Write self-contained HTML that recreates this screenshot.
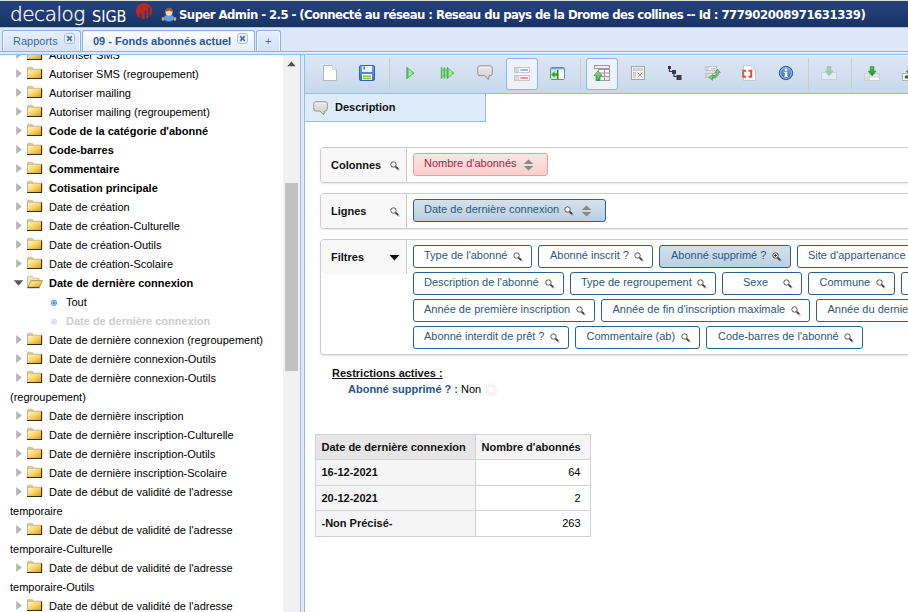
<!DOCTYPE html>
<html lang="fr">
<head>
<meta charset="utf-8">
<title>decalog SIGB</title>
<style>
*{box-sizing:border-box;margin:0;padding:0}
html,body{width:908px;height:612px;overflow:hidden;background:#fff}
body{font-family:"Liberation Sans",sans-serif;font-size:11px;color:#000;position:relative}
.abs{position:absolute}
/* header */
#hdr{position:absolute;left:0;top:0;width:908px;height:27px;background:linear-gradient(#23417c 0,#203c75 50%,#193264 100%);border-top:1px solid #dedede}
#logo{position:absolute;left:10px;top:0px;color:#fff;font-family:"DejaVu Sans Light","DejaVu Sans",sans-serif;font-weight:200;font-size:20px;line-height:27px;letter-spacing:-0.450px;-webkit-text-stroke:0.300px #fff}
#sigb{position:absolute;left:92px;top:1.500px;color:#fff;font-family:"DejaVu Sans Condensed","DejaVu Sans",sans-serif;font-size:16px;line-height:27px}
#title{position:absolute;left:179px;top:0;color:#fff;font-family:"DejaVu Sans Condensed","DejaVu Sans",sans-serif;font-weight:bold;font-size:13px;letter-spacing:-0.562px;line-height:27px;white-space:nowrap}
/* tab bar */
#tabbar{position:absolute;left:0;top:27px;width:908px;height:28px;background:#dfe8f6;border-bottom:1px solid #99bbe8}
#tabstrip{position:absolute;left:0;top:0;width:908px;height:25px;border-bottom:1px solid #8db2e3;background:#dce8f9;box-shadow:inset 0 1px 0 #a9c3ea}
.tab{box-shadow:inset 1px 1px 0 #f2f7fd,inset -1px 0 0 #f2f7fd;position:absolute;top:3px;height:21px;border:1px solid #8db2e3;border-bottom:none;border-radius:3px 3px 0 0;background:linear-gradient(#e6effb,#d3e2f7);color:#416aa3;font-size:11px;line-height:20px;white-space:nowrap}
.clw{position:absolute;top:2px;line-height:0}
.tab.act{background:linear-gradient(#fff,#e4edf9);color:#2a559d;font-weight:bold}
/* left tree */
#tree{position:absolute;left:0;top:55px;width:283px;height:557px;overflow:hidden;background:#fff}
#treein{position:absolute;left:0;top:-9px;width:283px;padding-left:10px}
.n{line-height:19px;font-size:11px;color:#000;display:block}
.n.b{font-weight:bold}
.n.leaf{padding-left:39px}
.n.dis{color:#cdcdcd;font-weight:bold}
.ar,.fo,.bu{display:inline-block;vertical-align:top;height:19px;position:relative}
.ar{width:16px}
.fo{width:23px}
.bu{width:17px}
#sb{position:absolute;left:283px;top:55px;width:17px;height:557px;background:#f1f1f1}
#thumb{position:absolute;left:2px;top:128px;width:13px;height:188px;background:#c1c1c1}
#split{position:absolute;left:300px;top:55px;width:5px;height:557px;background:#dfe8f6;border-left:1px solid #99bbe8;border-right:1px solid #99bbe8}
/* toolbar */
#tb{position:absolute;left:305px;top:55px;width:603px;height:39px;background:linear-gradient(#dde7f4 0,#c7d8ed 100%);border-bottom:1px solid #99bbe8;overflow:hidden;box-shadow:inset 0 1px 0 #eef4fc}
.sep{position:absolute;top:3px;width:1px;height:32px;background:#cfcdcb}
.pressed{position:absolute;top:3px;width:32px;height:32px;border:1px solid #8db2e3;border-radius:3px;background:#edf3fc}
.ic{position:absolute;width:16px;height:16px;top:10px}
#desc{position:absolute;left:305px;top:94px;width:181px;height:28px;background:#deebfa;border-right:1px solid #99bbe8;border-bottom:1px solid #99bbe8;font-weight:bold;line-height:26px;padding-left:30px;color:#111}
/* panels */
.box{position:absolute;left:320px;width:620px;border:1px solid #ccc;border-radius:4px;background:#fff;box-shadow:0 1px 2px rgba(0,0,0,.1)}
.lab{position:absolute;left:0;top:0;width:86px;height:34px;background:#f8f8f8;border-right:1px solid #ccc;border-radius:3px 0 0 3px;font-weight:bold;line-height:34px;padding-left:10px;color:#111}
.li{position:absolute;left:69.300px;top:13px;line-height:0}
.btn{position:absolute;height:23px;border:1px solid #2c5f8e;border-radius:3px;background:#fff;color:#2a5885;font-size:11px;line-height:19px;white-space:nowrap;overflow:hidden}
.btn .t{position:absolute;top:0}
.btn .i{position:absolute;line-height:0}
.btn.on{background:linear-gradient(#d5e1ec,#bccfe0)}
.btn.red{border-color:#ee9c9c;background:linear-gradient(#fde6e5,#f8cfce);color:#a3283a}
.mg{display:block}
.so{display:block}
/* table */
#res{position:absolute;left:315px;top:434px;width:275px;border-collapse:collapse;table-layout:fixed;font-size:11px}
#res td,#res th{border:1px solid #d2d2d2;padding:5px 9.500px 0 5.500px;vertical-align:top;white-space:nowrap;line-height:14px}
#res th{background:#f5f5f5;text-align:left;font-weight:bold;color:#111}
#res th.h{background:#e6e6e6}
#res td{text-align:right;background:#fff}
</style>
</head>
<body>
<div id="hdr">
  <div id="logo">decalog</div>
  <div id="sigb">SIGB</div>
  <svg class="abs" style="left:135px;top:0px" width="18" height="20" viewBox="0 0 18 20"><circle cx="9" cy="10" r="8.100" fill="#b32a2a"/><path d="M5.900 12.500 V19 M10.400 9.500 V19 M14 6.500 V17" stroke="#1f3b73" stroke-width="1.400"/></svg>
  <svg class="abs" style="left:161px;top:6px" width="16" height="15" viewBox="0 0 16 15"><ellipse cx="8" cy="11" rx="5.300" ry="3.600" fill="#5aa2f2" stroke="#2f66c8" stroke-width=".8"/><rect x="0.800" y="10.300" width="2.400" height="3.400" rx="1" fill="#f5a23a"/><rect x="12.800" y="10.300" width="2.400" height="3.400" rx="1" fill="#f5a23a"/><ellipse cx="8" cy="5" rx="3.600" ry="3.700" fill="#f7d9bd"/><path d="M4.300 4.600 Q4.300 0.800 8 0.800 Q11.800 0.800 11.800 4.600 Q9.500 4.800 8.300 3.500 Q7 4.500 4.300 4.600Z" fill="#9a5a2a"/></svg>
  <div id="title">Super Admin - 2.5 - (Connecté au réseau : Reseau du pays de la Drome des collines -- Id : <span style="letter-spacing:-0.410px">777902008971631339)</span></div>
</div>
<div id="tabbar">
  <div id="tabstrip">
    <div class="tab" style="left:2px;width:79px;padding-left:10px">Rapports<span class="clw" style="left:61px"><svg class="cl" width="11" height="11" viewBox="0 0 11 11"><rect x="0.5" y="0.5" width="10" height="10" rx="2.500" fill="#e9f1fc" stroke="#a6c2e8"/><path d="M3.200 3.200 L7.800 7.800 M7.800 3.200 L3.200 7.800" stroke="#4a72b4" stroke-width="1.700"/></svg></span></div>
    <div class="tab act" style="left:82px;width:173px;padding-left:10px">09 - Fonds abonnés actuel<span class="clw" style="left:154px"><svg class="cl" width="11" height="11" viewBox="0 0 11 11"><rect x="0.5" y="0.5" width="10" height="10" rx="2.500" fill="#e9f1fc" stroke="#a6c2e8"/><path d="M3.200 3.200 L7.800 7.800 M7.800 3.200 L3.200 7.800" stroke="#4a72b4" stroke-width="1.700"/></svg></span></div>
    <div class="tab" style="left:256px;width:25px;padding-left:8px">+</div>
  </div>
</div>
<div id="tree"><div id="treein">
<!--TREE-->
<svg width="0" height="0" style="position:absolute"><defs>
<linearGradient id="fg" x1="0" y1="0" x2="1" y2="1"><stop offset="0" stop-color="#fffbe0"/><stop offset=".5" stop-color="#f8d568"/><stop offset="1" stop-color="#d99a14"/></linearGradient>
<g id="fc"><path d="M1.500 3 Q1.500 2.300 2.300 2.300 L5.700 2.300 Q6.500 2.300 6.800 3 L7.200 4.200 L1.500 4.200Z" fill="#f3dc9a" stroke="#c9b98a" stroke-width=".9"/><rect x="1.500" y="4.200" width="14" height="9" fill="url(#fg)" stroke="#c9b070" stroke-width=".9"/><path d="M1 13.500 L16 13.500 M15.600 4.500 L15.600 13.500" stroke="#3a2c10" stroke-width="1.100" fill="none"/></g>
<g id="fop"><path d="M1.500 13.300 L1.500 3 Q1.500 2.300 2.300 2.300 L5.700 2.300 Q6.500 2.300 6.800 3 L7.200 4.200 L13 4.200 L13 6.500" fill="#f8e7ac" stroke="#c9b98a" stroke-width=".9"/><path d="M1.800 13.300 L5 6.700 L16.500 6.700 L13.300 13.300Z" fill="url(#fg)" stroke="#a88a3a" stroke-width=".9"/><path d="M1.300 13.700 L13.500 13.700" stroke="#4a3a14" stroke-width="1"/></g>
</defs></svg>
<div class="n"><span class="ar"><svg width="16" height="19" viewBox="0 0 16 19"><path d="M6.2 3.900 L11.900 8.500 L6.2 13.100Z" fill="#b6b6b6"/></svg></span><span class="fo"><svg width="23" height="19" viewBox="0 0 23 19"><use href="#fc"/></svg></span>Autoriser SMS</div>
<div class="n"><span class="ar"><svg width="16" height="19" viewBox="0 0 16 19"><path d="M6.2 3.900 L11.900 8.500 L6.2 13.100Z" fill="#b6b6b6"/></svg></span><span class="fo"><svg width="23" height="19" viewBox="0 0 23 19"><use href="#fc"/></svg></span>Autoriser SMS (regroupement)</div>
<div class="n"><span class="ar"><svg width="16" height="19" viewBox="0 0 16 19"><path d="M6.2 3.900 L11.900 8.500 L6.2 13.100Z" fill="#b6b6b6"/></svg></span><span class="fo"><svg width="23" height="19" viewBox="0 0 23 19"><use href="#fc"/></svg></span>Autoriser mailing</div>
<div class="n"><span class="ar"><svg width="16" height="19" viewBox="0 0 16 19"><path d="M6.2 3.900 L11.900 8.500 L6.2 13.100Z" fill="#b6b6b6"/></svg></span><span class="fo"><svg width="23" height="19" viewBox="0 0 23 19"><use href="#fc"/></svg></span>Autoriser mailing (regroupement)</div>
<div class="n b"><span class="ar"><svg width="16" height="19" viewBox="0 0 16 19"><path d="M6.2 3.900 L11.900 8.500 L6.2 13.100Z" fill="#b6b6b6"/></svg></span><span class="fo"><svg width="23" height="19" viewBox="0 0 23 19"><use href="#fc"/></svg></span>Code de la catégorie d'abonné</div>
<div class="n b"><span class="ar"><svg width="16" height="19" viewBox="0 0 16 19"><path d="M6.2 3.900 L11.900 8.500 L6.2 13.100Z" fill="#b6b6b6"/></svg></span><span class="fo"><svg width="23" height="19" viewBox="0 0 23 19"><use href="#fc"/></svg></span>Code-barres</div>
<div class="n b"><span class="ar"><svg width="16" height="19" viewBox="0 0 16 19"><path d="M6.2 3.900 L11.900 8.500 L6.2 13.100Z" fill="#b6b6b6"/></svg></span><span class="fo"><svg width="23" height="19" viewBox="0 0 23 19"><use href="#fc"/></svg></span>Commentaire</div>
<div class="n b"><span class="ar"><svg width="16" height="19" viewBox="0 0 16 19"><path d="M6.2 3.900 L11.900 8.500 L6.2 13.100Z" fill="#b6b6b6"/></svg></span><span class="fo"><svg width="23" height="19" viewBox="0 0 23 19"><use href="#fc"/></svg></span>Cotisation principale</div>
<div class="n"><span class="ar"><svg width="16" height="19" viewBox="0 0 16 19"><path d="M6.2 3.900 L11.900 8.500 L6.2 13.100Z" fill="#b6b6b6"/></svg></span><span class="fo"><svg width="23" height="19" viewBox="0 0 23 19"><use href="#fc"/></svg></span>Date de création</div>
<div class="n"><span class="ar"><svg width="16" height="19" viewBox="0 0 16 19"><path d="M6.2 3.900 L11.900 8.500 L6.2 13.100Z" fill="#b6b6b6"/></svg></span><span class="fo"><svg width="23" height="19" viewBox="0 0 23 19"><use href="#fc"/></svg></span>Date de création-Culturelle</div>
<div class="n"><span class="ar"><svg width="16" height="19" viewBox="0 0 16 19"><path d="M6.2 3.900 L11.900 8.500 L6.2 13.100Z" fill="#b6b6b6"/></svg></span><span class="fo"><svg width="23" height="19" viewBox="0 0 23 19"><use href="#fc"/></svg></span>Date de création-Outils</div>
<div class="n"><span class="ar"><svg width="16" height="19" viewBox="0 0 16 19"><path d="M6.2 3.900 L11.900 8.500 L6.2 13.100Z" fill="#b6b6b6"/></svg></span><span class="fo"><svg width="23" height="19" viewBox="0 0 23 19"><use href="#fc"/></svg></span>Date de création-Scolaire</div>
<div class="n b"><span class="ar"><svg width="16" height="19" viewBox="0 0 16 19"><path d="M3.8 6.2 L13.2 6.2 L8.5 11.8Z" fill="#585858"/></svg></span><span class="fo"><svg width="23" height="19" viewBox="0 0 23 19"><use href="#fop"/></svg></span>Date de dernière connexion</div>
<div class="n leaf"><span class="bu"><svg width="17" height="19" viewBox="0 0 17 19"><circle cx="5" cy="9.800" r="2.700" fill="#d4e8fb" stroke="#4a9aea" stroke-width="1"/><circle cx="5" cy="9.800" r="1.500" fill="#3f90e8"/></svg></span>Tout</div>
<div class="n leaf dis"><span class="bu"><svg width="17" height="19" viewBox="0 0 17 19"><circle cx="5" cy="9.800" r="2.700" fill="#eef5fd" stroke="#cfe2f8" stroke-width="1"/><circle cx="5" cy="9.800" r="1.500" fill="#c6dcf6"/></svg></span>Date de dernière connexion</div>
<div class="n"><span class="ar"><svg width="16" height="19" viewBox="0 0 16 19"><path d="M6.2 3.900 L11.900 8.500 L6.2 13.100Z" fill="#b6b6b6"/></svg></span><span class="fo"><svg width="23" height="19" viewBox="0 0 23 19"><use href="#fc"/></svg></span>Date de dernière connexion (regroupement)</div>
<div class="n"><span class="ar"><svg width="16" height="19" viewBox="0 0 16 19"><path d="M6.2 3.900 L11.900 8.500 L6.2 13.100Z" fill="#b6b6b6"/></svg></span><span class="fo"><svg width="23" height="19" viewBox="0 0 23 19"><use href="#fc"/></svg></span>Date de dernière connexion-Outils</div>
<div class="n"><span class="ar"><svg width="16" height="19" viewBox="0 0 16 19"><path d="M6.2 3.900 L11.900 8.500 L6.2 13.100Z" fill="#b6b6b6"/></svg></span><span class="fo"><svg width="23" height="19" viewBox="0 0 23 19"><use href="#fc"/></svg></span>Date de dernière connexion-Outils (regroupement)</div>
<div class="n"><span class="ar"><svg width="16" height="19" viewBox="0 0 16 19"><path d="M6.2 3.900 L11.900 8.500 L6.2 13.100Z" fill="#b6b6b6"/></svg></span><span class="fo"><svg width="23" height="19" viewBox="0 0 23 19"><use href="#fc"/></svg></span>Date de dernière inscription</div>
<div class="n"><span class="ar"><svg width="16" height="19" viewBox="0 0 16 19"><path d="M6.2 3.900 L11.900 8.500 L6.2 13.100Z" fill="#b6b6b6"/></svg></span><span class="fo"><svg width="23" height="19" viewBox="0 0 23 19"><use href="#fc"/></svg></span>Date de dernière inscription-Culturelle</div>
<div class="n"><span class="ar"><svg width="16" height="19" viewBox="0 0 16 19"><path d="M6.2 3.900 L11.900 8.500 L6.2 13.100Z" fill="#b6b6b6"/></svg></span><span class="fo"><svg width="23" height="19" viewBox="0 0 23 19"><use href="#fc"/></svg></span>Date de dernière inscription-Outils</div>
<div class="n"><span class="ar"><svg width="16" height="19" viewBox="0 0 16 19"><path d="M6.2 3.900 L11.900 8.500 L6.2 13.100Z" fill="#b6b6b6"/></svg></span><span class="fo"><svg width="23" height="19" viewBox="0 0 23 19"><use href="#fc"/></svg></span>Date de dernière inscription-Scolaire</div>
<div class="n"><span class="ar"><svg width="16" height="19" viewBox="0 0 16 19"><path d="M6.2 3.900 L11.900 8.500 L6.2 13.100Z" fill="#b6b6b6"/></svg></span><span class="fo"><svg width="23" height="19" viewBox="0 0 23 19"><use href="#fc"/></svg></span>Date de début de validité de l'adresse temporaire</div>
<div class="n"><span class="ar"><svg width="16" height="19" viewBox="0 0 16 19"><path d="M6.2 3.900 L11.900 8.500 L6.2 13.100Z" fill="#b6b6b6"/></svg></span><span class="fo"><svg width="23" height="19" viewBox="0 0 23 19"><use href="#fc"/></svg></span>Date de début de validité de l'adresse temporaire-Culturelle</div>
<div class="n"><span class="ar"><svg width="16" height="19" viewBox="0 0 16 19"><path d="M6.2 3.900 L11.900 8.500 L6.2 13.100Z" fill="#b6b6b6"/></svg></span><span class="fo"><svg width="23" height="19" viewBox="0 0 23 19"><use href="#fc"/></svg></span>Date de début de validité de l'adresse temporaire-Outils</div>
<div class="n"><span class="ar"><svg width="16" height="19" viewBox="0 0 16 19"><path d="M6.2 3.900 L11.900 8.500 L6.2 13.100Z" fill="#b6b6b6"/></svg></span><span class="fo"><svg width="23" height="19" viewBox="0 0 23 19"><use href="#fc"/></svg></span>Date de début de validité de l'adresse temporaire-Scolaire</div>
<!--/TREE-->
</div></div>
<div id="sb"><svg class="abs" style="left:4px;top:6px" width="9" height="6" viewBox="0 0 9 6"><path d="M0.300 5.200 L4.500 0.600 L8.700 5.200Z" fill="#505050"/></svg><div id="thumb"></div></div>
<div id="split"></div>
<div id="tb">
<!--TOOLBAR-->
<svg width="0" height="0" style="position:absolute"><defs>
<linearGradient id="gG" x1="0" y1="0" x2="1" y2="0"><stop offset="0" stop-color="#3fae3f"/><stop offset=".45" stop-color="#b4efb4"/><stop offset="1" stop-color="#52c052"/></linearGradient>
<linearGradient id="gGv" x1="0" y1="0" x2="0" y2="1"><stop offset="0" stop-color="#9fe09f"/><stop offset="1" stop-color="#3fa83f"/></linearGradient>
<linearGradient id="gGd" x1="0" y1="0" x2="0" y2="1"><stop offset="0" stop-color="#58c058"/><stop offset="1" stop-color="#1f8f1f"/></linearGradient>
<linearGradient id="gB" x1="0" y1="0" x2="0" y2="1"><stop offset="0" stop-color="#6c9eea"/><stop offset="1" stop-color="#3f70c8"/></linearGradient>
<linearGradient id="gC" x1="0" y1="0" x2="0" y2="1"><stop offset="0" stop-color="#f4f4f4"/><stop offset="1" stop-color="#c9c9c9"/></linearGradient>
<radialGradient id="gI" cx=".5" cy=".35" r=".7"><stop offset="0" stop-color="#7fb0ea"/><stop offset="1" stop-color="#2a58a8"/></radialGradient>
</defs></svg>
<svg class="ic" style="left:18px;top:10px" width="16" height="16" viewBox="0 0 16 16"><path d="M0.5 0.5 L9.5 0.5 L13.5 4.5 L13.5 15.5 L0.5 15.5Z" fill="#fdfdfd" stroke="#b4b8c0" stroke-width="1"/><path d="M9.5 0.5 L9.5 4.5 L13.5 4.5Z" fill="#efefef" stroke="#cfd2d8" stroke-width=".8"/></svg>
<svg class="ic" style="left:54px;top:10px" width="16" height="16" viewBox="0 0 16 16"><rect x="0.5" y="0.5" width="15" height="15" rx="1.5" fill="url(#gB)" stroke="#3562b8"/><rect x="3" y="1" width="10" height="6" fill="#eef3fb"/><rect x="4.5" y="1.5" width="1.5" height="3" fill="#3f6fba"/><rect x="3" y="9" width="10" height="6" fill="#f4f8f0"/><rect x="4" y="10.5" width="8" height="1.5" fill="#7fbf4f"/><rect x="4" y="12.7" width="8" height="1.5" fill="#7fbf4f"/></svg>
<div class="sep" style="left:84px"></div>
<svg class="ic" style="left:97px;top:10px" width="16" height="16" viewBox="0 0 16 16"><path d="M4.800 2.300 L12 8 L4.800 13.700Z" fill="url(#gG)" stroke="#3fae3f" stroke-width=".7"/></svg>
<svg class="ic" style="left:134px;top:10px" width="16" height="16" viewBox="0 0 16 16"><path d="M2.200 2.300 L6.500 8 L2.200 13.700Z" fill="url(#gG)" stroke="#3fae3f" stroke-width=".6"/><path d="M5 2.300 L9.800 8 L5 13.700Z" fill="url(#gG)" stroke="#3fae3f" stroke-width=".6"/><path d="M8 2.300 L15 8 L8 13.700Z" fill="url(#gG)" stroke="#3fae3f" stroke-width=".6"/></svg>
<svg class="ic" style="left:172px;top:10px" width="16" height="16" viewBox="0 0 16 16"><path d="M3 0.8 L13 0.8 Q15.2 0.8 15.2 3 L15.2 8.5 Q15.2 10.7 13 10.7 L12.3 10.7 L11.3 14.6 L7.5 10.7 L3 10.7 Q0.8 10.7 0.8 8.5 L0.8 3 Q0.8 0.8 3 0.8Z" fill="url(#gC)" stroke="#8f8f8f" stroke-width="1"/><path d="M3 4 H13 M3 6 H13 M3 8 H13" stroke="#d8d8d8" stroke-width=".8"/></svg>
<div class="pressed" style="left:201px"></div>
<svg class="ic" style="left:209px;top:10px" width="16" height="16" viewBox="0 0 16 16"><rect x="0.5" y="2.5" width="15" height="5" fill="#fff" stroke="#c9c9c9"/><rect x="1" y="3" width="4" height="4" fill="#d8d8d8"/><rect x="6.5" y="4" width="7.5" height="2" fill="#9dbfe3"/><rect x="0.5" y="10.5" width="15" height="5" fill="#fff" stroke="#c9c9c9"/><rect x="1" y="11" width="4" height="4" fill="#d8d8d8"/><rect x="6.5" y="12" width="7.5" height="2" fill="#e59a9a"/></svg>
<svg class="ic" style="left:245px;top:10px" width="16" height="16" viewBox="0 0 16 16"><rect x="0.5" y="2.500" width="14" height="12" rx="1" fill="#fff" stroke="#5a88d0"/><rect x="1" y="3" width="13" height="1.500" fill="#7aa4e4"/><rect x="1" y="5" width="6" height="9" fill="#c9eab9"/><path d="M1.2 9.5 L4.5 6.3 L4.5 8.3 L7 8.3 L7 10.7 L4.5 10.7 L4.5 12.7Z" fill="#3aa63a"/><rect x="7" y="5" width="1.5" height="9" fill="#2e8a2e"/></svg>
<div class="sep" style="left:275px"></div>
<div class="pressed" style="left:281px"></div>
<svg class="ic" style="left:289px;top:10px" width="16" height="16" viewBox="0 0 16 16"><rect x="0.5" y="0.5" width="15" height="3" fill="#f0f0f0" stroke="#9c9c9c"/><rect x="4.5" y="4.500" width="11" height="11" fill="#fff" stroke="#9c9c9c"/><path d="M4.5 8 H15.5 M4.5 11.5 H15.5 M10.500 4.5 V15.5" stroke="#9c9c9c" stroke-width="1.200"/><rect x="11.200" y="12.200" width="3.800" height="2.800" fill="#dbeaf8"/><path d="M4 6 L8 10.5 L6 10.5 L6 15.5 L2 15.5 L2 10.5 L0 10.5Z" fill="url(#gGv)" stroke="#3a963a" stroke-width=".8"/></svg>
<svg class="ic" style="left:326px;top:11px" width="16" height="16" viewBox="0 0 16 16"><rect x="0.5" y="0.5" width="13" height="13" fill="#f4f4f4" stroke="#a4a4a4"/><rect x="2.5" y="2.5" width="9" height="2" fill="#dcdcdc" stroke="#b4b4b4" stroke-width=".6"/><rect x="2.5" y="6.5" width="2" height="5" fill="#dcdcdc" stroke="#b4b4b4" stroke-width=".6"/><path d="M6.5 6.5 L11.5 11.5 M11.5 6.5 L6.5 11.5" stroke="#a4a4a4" stroke-width="1"/></svg>
<svg class="ic" style="left:362.3px;top:10px" width="16" height="16" viewBox="0 0 16 16"><path d="M2.5 3 V6.5 H7 V11.5 H11" stroke="#3a3a40" stroke-width="1.2" fill="none"/><rect x="1" y="1" width="3" height="3" fill="#3a3a40"/><rect x="5" y="5" width="4" height="4" fill="#3a3a40"/><rect x="9.5" y="10" width="5" height="5" fill="#3a3a40"/></svg>
<svg class="ic" style="left:400px;top:10px" width="16" height="16" viewBox="0 0 16 16"><rect x="0.5" y="1.5" width="11" height="4" fill="#fff" stroke="#c4c4c4"/><rect x="1" y="2" width="3.5" height="3" fill="#d4d4d4"/><rect x="6" y="3" width="4.5" height="1.3" fill="#9dbfe3"/><rect x="0.5" y="8.500" width="11" height="4" fill="#fff" stroke="#c4c4c4"/><rect x="1" y="9" width="3.5" height="3" fill="#d4d4d4"/><rect x="6" y="10" width="4.5" height="1.3" fill="#e59a9a"/><path d="M12.500 4.200 L15.300 7.600 L13.700 7.600 Q13.700 11.300 10.500 11.800 L8.500 11.800 L8.500 10.400 L10 10.400 Q11.500 10.200 11.500 7.600 L9.800 7.600Z" fill="#7cc87c" stroke="#3f9f3f" stroke-width=".7"/><path d="M7.500 9.300 L7.500 15.300 L3.800 12.300Z" fill="#7cc87c" stroke="#3f9f3f" stroke-width=".7"/><path d="M7.300 11.300 H10.500 V13.300 H7.300Z" fill="#7cc87c" stroke="#3f9f3f" stroke-width=".5"/></svg>
<svg class="ic" style="left:437px;top:10px" width="16" height="16" viewBox="0 0 16 16"><path d="M1.500 0.500 L9.500 0.500 L13.5 4.5 L13.5 15.5 L1.500 15.5Z" fill="#fdfdfd" stroke="#c4c7cc"/><path d="M9.5 0.5 L9.5 4.5 L13.5 4.5Z" fill="#ececec" stroke="#d4d7dc" stroke-width=".8"/><path d="M4 5.700 H1.200 V11.800 H4 M6.500 5.700 H9.200 V11.800 H6.500" stroke="#f04848" stroke-width="1.900" fill="none"/></svg>
<svg class="ic" style="left:473px;top:10px" width="16" height="16" viewBox="0 0 16 16"><circle cx="8" cy="8" r="6.700" fill="url(#gI)" stroke="#2d5aa6" stroke-width="1"/><circle cx="8" cy="8" r="5.500" fill="none" stroke="#a9c8ee" stroke-width=".9"/><rect x="7" y="7" width="2.200" height="4.600" fill="#fff"/><rect x="6.300" y="7" width="2" height="1" fill="#fff"/><rect x="6.300" y="11" width="3.600" height="1" fill="#fff"/><circle cx="8" cy="4.800" r="1.200" fill="#fff"/></svg>
<div class="sep" style="left:503px"></div>
<svg class="ic" style="left:516px;top:11px" width="16" height="16" viewBox="0 0 16 16"><g opacity=".4"><rect x="0.5" y="6.500" width="15" height="7" fill="#fff" stroke="#b4c0cc"/><path d="M6.300 0.300 H9.900 V5 H12 L8.100 10 L4.200 5 H6.300Z" fill="#4db04d" stroke="#2f8f2f" stroke-width=".6"/></g></svg>
<div class="sep" style="left:546px"></div>
<svg class="ic" style="left:559px;top:11px" width="16" height="16" viewBox="0 0 16 16"><rect x="0.5" y="7.500" width="15" height="7" fill="#fff" stroke="#d0d0d0"/><rect x="1" y="8" width="14" height="2.800" fill="#e6e6e6"/><path d="M0.500 11 H15.500 M5.500 7.500 V14.500" stroke="#d0d0d0"/><rect x="1" y="11.500" width="4" height="2.500" fill="#dcdcdc"/><path d="M6.300 0.300 H9.900 V5 H12 L8.100 10 L4.200 5 H6.300Z" fill="url(#gGd)" stroke="#2a8a2a" stroke-width=".6"/></svg>
<svg class="ic" style="left:597px;top:11px" width="16" height="16" viewBox="0 0 16 16"><rect x="0.5" y="7.500" width="15" height="7" fill="#fff" stroke="#b4b4b4"/><ellipse cx="5" cy="11" rx="2.500" ry="1.800" fill="#555"/><path d="M6.300 0.300 H9.900 V5 H12 L8.100 10 L4.200 5 H6.300Z" fill="url(#gGd)" stroke="#2a8a2a" stroke-width=".6"/></svg>
<!--/TOOLBAR-->
</div>
<div id="desc"><svg class="abs" style="left:8px;top:7px" width="15" height="15" viewBox="0 0 16 16"><path d="M3 0.8 L13 0.8 Q15.2 0.8 15.2 3 L15.2 8.5 Q15.2 10.7 13 10.7 L12.3 10.7 L11.3 14.6 L7.5 10.7 L3 10.7 Q0.8 10.7 0.8 8.5 L0.8 3 Q0.8 0.8 3 0.8Z" fill="url(#gC)" stroke="#8f8f8f" stroke-width="1"/><path d="M3 4 H13 M3 6 H13 M3 8 H13" stroke="#d8d8d8" stroke-width=".8"/></svg>Description</div>
<!--PANELS-->
<div class="box" style="top:147px;height:36px"><div class="lab">Colonnes<span class="li"><svg class="mg" width="10" height="10" viewBox="0 0 10 10"><path d="M6.300 6.300 L8.200 8.100" stroke="#888" stroke-width="2.200" stroke-linecap="round" opacity=".45" transform="translate(.5 .6)"/><path d="M5.800 5.800 L7.700 7.600" stroke="#3c3c3c" stroke-width="1.600" stroke-linecap="round"/><circle cx="3.500" cy="3.500" r="2.700" fill="#fff" stroke="#505050" stroke-width=".95"/></svg></span></div></div>
<div class="box" style="top:193px;height:36px"><div class="lab">Lignes<span class="li"><svg class="mg" width="10" height="10" viewBox="0 0 10 10"><path d="M6.300 6.300 L8.200 8.100" stroke="#888" stroke-width="2.200" stroke-linecap="round" opacity=".45" transform="translate(.5 .6)"/><path d="M5.800 5.800 L7.700 7.600" stroke="#3c3c3c" stroke-width="1.600" stroke-linecap="round"/><circle cx="3.500" cy="3.500" r="2.700" fill="#fff" stroke="#505050" stroke-width=".95"/></svg></span></div></div>
<div class="box" style="top:239px;height:116px"><div class="lab">Filtres<span class="li" style="left:68px;top:15px"><svg width="12" height="6" viewBox="0 0 12 6" style="display:block"><path d="M0.500 0 L10.500 0 L5.500 5.500Z" fill="#111"/></svg></span></div></div>
<div class="btn red" style="left:413px;top:153px;width:135px"><span class="t" style="left:10px">Nombre d'abonnés</span><span class="i" style="right:13px;top:4.500px"><svg class="so" width="11" height="12" viewBox="0 0 11 12"><path d="M5.500 0.500 L10.300 5 L0.700 5Z M0.700 7 L10.300 7 L5.500 11.500Z" fill="#8a8a8a"/></svg></span></div>
<div class="btn on" style="left:413px;top:199px;width:193px"><span class="t" style="left:10px">Date de dernière connexion</span><span class="i" style="right:13px;top:4.500px"><svg class="so" width="11" height="12" viewBox="0 0 11 12"><path d="M5.500 0.500 L10.300 5 L0.700 5Z M0.700 7 L10.300 7 L5.500 11.500Z" fill="#8a8a8a"/></svg></span><span class="i" style="right:31px;top:5.900px"><svg class="mg" width="10" height="10" viewBox="0 0 10 10"><path d="M6.300 6.300 L8.200 8.100" stroke="#888" stroke-width="2.200" stroke-linecap="round" opacity=".45" transform="translate(.5 .6)"/><path d="M5.800 5.800 L7.700 7.600" stroke="#3c3c3c" stroke-width="1.600" stroke-linecap="round"/><circle cx="3.500" cy="3.500" r="2.700" fill="#fff" stroke="#505050" stroke-width=".95"/></svg></span></div>
<div class="btn " style="left:413px;top:245px;width:119px"><span class="t" style="left:10px">Type de l'abonné</span><span class="i" style="right:8px;top:5.900px"><svg class="mg" width="10" height="10" viewBox="0 0 10 10"><path d="M6.300 6.300 L8.200 8.100" stroke="#888" stroke-width="2.200" stroke-linecap="round" opacity=".45" transform="translate(.5 .6)"/><path d="M5.800 5.800 L7.700 7.600" stroke="#3c3c3c" stroke-width="1.600" stroke-linecap="round"/><circle cx="3.500" cy="3.500" r="2.700" fill="#fff" stroke="#505050" stroke-width=".95"/></svg></span></div>
<div class="btn " style="left:538px;top:245px;width:115px"><span class="t" style="left:11px">Abonné inscrit ?</span><span class="i" style="right:8px;top:5.900px"><svg class="mg" width="10" height="10" viewBox="0 0 10 10"><path d="M6.300 6.300 L8.200 8.100" stroke="#888" stroke-width="2.200" stroke-linecap="round" opacity=".45" transform="translate(.5 .6)"/><path d="M5.800 5.800 L7.700 7.600" stroke="#3c3c3c" stroke-width="1.600" stroke-linecap="round"/><circle cx="3.500" cy="3.500" r="2.700" fill="#fff" stroke="#505050" stroke-width=".95"/></svg></span></div>
<div class="btn on" style="left:659px;top:245px;width:132px"><span class="t" style="left:11px">Abonné supprimé ?</span><span class="i" style="right:8px;top:5.900px"><svg class="mg" width="10" height="10" viewBox="0 0 10 10"><path d="M6.300 6.300 L8.200 8.100" stroke="#888" stroke-width="2.200" stroke-linecap="round" opacity=".45" transform="translate(.5 .6)"/><path d="M5.800 5.800 L7.700 7.600" stroke="#3c3c3c" stroke-width="1.600" stroke-linecap="round"/><circle cx="3.500" cy="3.500" r="2.700" fill="#fff" stroke="#444" stroke-width=".9"/><path d="M2.200 3.500 H4.800 M3.500 2.200 V4.800" stroke="#333" stroke-width="1.100"/></svg></span></div>
<div class="btn " style="left:797px;top:245px;width:140px"><span class="t" style="left:10px">Site d'appartenance</span><span class="i" style="right:8px;top:5.900px"><svg class="mg" width="10" height="10" viewBox="0 0 10 10"><path d="M6.300 6.300 L8.200 8.100" stroke="#888" stroke-width="2.200" stroke-linecap="round" opacity=".45" transform="translate(.5 .6)"/><path d="M5.800 5.800 L7.700 7.600" stroke="#3c3c3c" stroke-width="1.600" stroke-linecap="round"/><circle cx="3.500" cy="3.500" r="2.700" fill="#fff" stroke="#505050" stroke-width=".95"/></svg></span></div>
<div class="btn " style="left:413px;top:272px;width:151px"><span class="t" style="left:10px">Description de l'abonné</span><span class="i" style="right:8px;top:5.900px"><svg class="mg" width="10" height="10" viewBox="0 0 10 10"><path d="M6.300 6.300 L8.200 8.100" stroke="#888" stroke-width="2.200" stroke-linecap="round" opacity=".45" transform="translate(.5 .6)"/><path d="M5.800 5.800 L7.700 7.600" stroke="#3c3c3c" stroke-width="1.600" stroke-linecap="round"/><circle cx="3.500" cy="3.500" r="2.700" fill="#fff" stroke="#505050" stroke-width=".95"/></svg></span></div>
<div class="btn " style="left:570px;top:272px;width:146px"><span class="t" style="left:10px">Type de regroupement</span><span class="i" style="right:8px;top:5.900px"><svg class="mg" width="10" height="10" viewBox="0 0 10 10"><path d="M6.300 6.300 L8.200 8.100" stroke="#888" stroke-width="2.200" stroke-linecap="round" opacity=".45" transform="translate(.5 .6)"/><path d="M5.800 5.800 L7.700 7.600" stroke="#3c3c3c" stroke-width="1.600" stroke-linecap="round"/><circle cx="3.500" cy="3.500" r="2.700" fill="#fff" stroke="#505050" stroke-width=".95"/></svg></span></div>
<div class="btn " style="left:722px;top:272px;width:80px"><span class="t" style="left:20px">Sexe</span><span class="i" style="right:8px;top:5.900px"><svg class="mg" width="10" height="10" viewBox="0 0 10 10"><path d="M6.300 6.300 L8.200 8.100" stroke="#888" stroke-width="2.200" stroke-linecap="round" opacity=".45" transform="translate(.5 .6)"/><path d="M5.800 5.800 L7.700 7.600" stroke="#3c3c3c" stroke-width="1.600" stroke-linecap="round"/><circle cx="3.500" cy="3.500" r="2.700" fill="#fff" stroke="#505050" stroke-width=".95"/></svg></span></div>
<div class="btn " style="left:808px;top:272px;width:87px"><span class="t" style="left:10.5px">Commune</span><span class="i" style="right:8px;top:5.900px"><svg class="mg" width="10" height="10" viewBox="0 0 10 10"><path d="M6.300 6.300 L8.200 8.100" stroke="#888" stroke-width="2.200" stroke-linecap="round" opacity=".45" transform="translate(.5 .6)"/><path d="M5.800 5.800 L7.700 7.600" stroke="#3c3c3c" stroke-width="1.600" stroke-linecap="round"/><circle cx="3.500" cy="3.500" r="2.700" fill="#fff" stroke="#505050" stroke-width=".95"/></svg></span></div>
<div class="btn " style="left:901px;top:272px;width:120px"><span class="t" style="left:10px">Code postal</span><span class="i" style="right:8px;top:5.900px"><svg class="mg" width="10" height="10" viewBox="0 0 10 10"><path d="M6.300 6.300 L8.200 8.100" stroke="#888" stroke-width="2.200" stroke-linecap="round" opacity=".45" transform="translate(.5 .6)"/><path d="M5.800 5.800 L7.700 7.600" stroke="#3c3c3c" stroke-width="1.600" stroke-linecap="round"/><circle cx="3.500" cy="3.500" r="2.700" fill="#fff" stroke="#505050" stroke-width=".95"/></svg></span></div>
<div class="btn " style="left:413px;top:299px;width:182px"><span class="t" style="left:10px">Année de première inscription</span><span class="i" style="right:8px;top:5.900px"><svg class="mg" width="10" height="10" viewBox="0 0 10 10"><path d="M6.300 6.300 L8.200 8.100" stroke="#888" stroke-width="2.200" stroke-linecap="round" opacity=".45" transform="translate(.5 .6)"/><path d="M5.800 5.800 L7.700 7.600" stroke="#3c3c3c" stroke-width="1.600" stroke-linecap="round"/><circle cx="3.500" cy="3.500" r="2.700" fill="#fff" stroke="#505050" stroke-width=".95"/></svg></span></div>
<div class="btn " style="left:601px;top:299px;width:209px"><span class="t" style="left:10.5px">Année de fin d'inscription maximale</span><span class="i" style="right:8px;top:5.900px"><svg class="mg" width="10" height="10" viewBox="0 0 10 10"><path d="M6.300 6.300 L8.200 8.100" stroke="#888" stroke-width="2.200" stroke-linecap="round" opacity=".45" transform="translate(.5 .6)"/><path d="M5.800 5.800 L7.700 7.600" stroke="#3c3c3c" stroke-width="1.600" stroke-linecap="round"/><circle cx="3.500" cy="3.500" r="2.700" fill="#fff" stroke="#505050" stroke-width=".95"/></svg></span></div>
<div class="btn " style="left:816px;top:299px;width:150px"><span class="t" style="left:10.5px">Année du dernier prêt</span><span class="i" style="right:8px;top:5.900px"><svg class="mg" width="10" height="10" viewBox="0 0 10 10"><path d="M6.300 6.300 L8.200 8.100" stroke="#888" stroke-width="2.200" stroke-linecap="round" opacity=".45" transform="translate(.5 .6)"/><path d="M5.800 5.800 L7.700 7.600" stroke="#3c3c3c" stroke-width="1.600" stroke-linecap="round"/><circle cx="3.500" cy="3.500" r="2.700" fill="#fff" stroke="#505050" stroke-width=".95"/></svg></span></div>
<div class="btn " style="left:413px;top:326px;width:156px"><span class="t" style="left:10px">Abonné interdit de prêt ?</span><span class="i" style="right:8px;top:5.900px"><svg class="mg" width="10" height="10" viewBox="0 0 10 10"><path d="M6.300 6.300 L8.200 8.100" stroke="#888" stroke-width="2.200" stroke-linecap="round" opacity=".45" transform="translate(.5 .6)"/><path d="M5.800 5.800 L7.700 7.600" stroke="#3c3c3c" stroke-width="1.600" stroke-linecap="round"/><circle cx="3.500" cy="3.500" r="2.700" fill="#fff" stroke="#505050" stroke-width=".95"/></svg></span></div>
<div class="btn " style="left:575px;top:326px;width:125px"><span class="t" style="left:10.5px">Commentaire (ab)</span><span class="i" style="right:8px;top:5.900px"><svg class="mg" width="10" height="10" viewBox="0 0 10 10"><path d="M6.300 6.300 L8.200 8.100" stroke="#888" stroke-width="2.200" stroke-linecap="round" opacity=".45" transform="translate(.5 .6)"/><path d="M5.800 5.800 L7.700 7.600" stroke="#3c3c3c" stroke-width="1.600" stroke-linecap="round"/><circle cx="3.500" cy="3.500" r="2.700" fill="#fff" stroke="#505050" stroke-width=".95"/></svg></span></div>
<div class="btn " style="left:706px;top:326px;width:157px"><span class="t" style="left:11px">Code-barres de l'abonné</span><span class="i" style="right:8px;top:5.900px"><svg class="mg" width="10" height="10" viewBox="0 0 10 10"><path d="M6.300 6.300 L8.200 8.100" stroke="#888" stroke-width="2.200" stroke-linecap="round" opacity=".45" transform="translate(.5 .6)"/><path d="M5.800 5.800 L7.700 7.600" stroke="#3c3c3c" stroke-width="1.600" stroke-linecap="round"/><circle cx="3.500" cy="3.500" r="2.700" fill="#fff" stroke="#505050" stroke-width=".95"/></svg></span></div>
<div class="abs" style="left:332px;top:366px;font-size:11px;font-weight:bold;text-decoration:underline;line-height:14px;color:#111">Restrictions actives :</div>
<div class="abs" style="left:348px;top:382px;font-size:11px;line-height:14px;white-space:nowrap"><b style="color:#27568a">Abonné supprimé ? :</b> Non<svg width="14" height="14" viewBox="0 0 14 14" style="vertical-align:-3.500px;margin-left:3px"><circle cx="7" cy="7" r="6.800" fill="#f5f5f5"/><path d="M4.800 4.800 L9.200 9.200 M9.200 4.800 L4.800 9.200" stroke="#fff" stroke-width="1.700"/></svg></div>
<!--/PANELS-->
<!--TABLE-->
<table id="res"><colgroup><col style="width:160px"><col style="width:115px"></colgroup><tr style="height:25px"><th class="h">Date de dernière connexion</th><th>Nombre d'abonnés</th></tr>
<tr style="height:26px"><th>16-12-2021</th><td>64</td></tr>
<tr style="height:25px"><th>20-12-2021</th><td>2</td></tr>
<tr style="height:26px"><th>-Non Précisé-</th><td>263</td></tr></table>
<!--/TABLE-->
</body>
</html>
